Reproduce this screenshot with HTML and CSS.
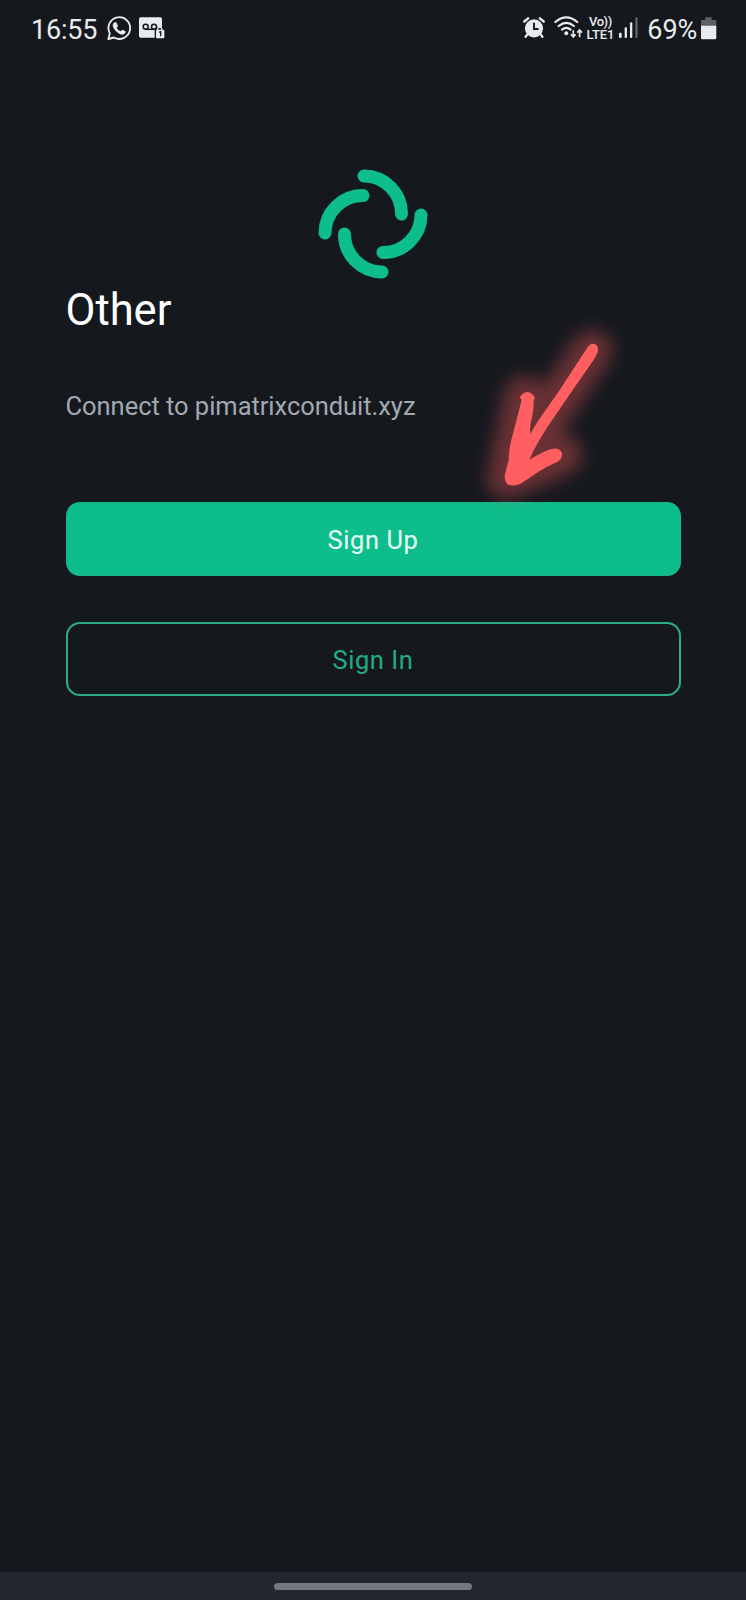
FILE: index.html
```html
<!DOCTYPE html>
<html lang="en">
<head>
<meta charset="utf-8">
<title>Other</title>
<link rel="stylesheet" href="styles.css">
</head>
<body>
<div class="screen">
  <header class="status">
    <div class="status-group">
      <span class="clock">16:55</span>
      <svg class="icon-chat" viewBox="0 0 72 72">
        <path d="M4 69 L8.500 52 A32.500 32.500 0 1 1 21 64.500 Z" fill="none" stroke="#e9ebed" stroke-width="5.500" stroke-linejoin="round"/>
        <path d="M23 19 L28 19 L33 30 L29 36 Q33 44 41 46 L46 41 L56 46 Q56 54 47 56 Q38 57 27 46 Q17 35 17 27 Q18 21 23 19 Z" fill="#e9ebed"/>
      </svg>
      <svg class="icon-voicemail" viewBox="0 0 78 66">
        <rect x="0" y="1" width="69" height="61" rx="5" fill="#e9ebed"/>
        <g fill="none" stroke="#16191e" stroke-width="4.500">
          <circle cx="20" cy="29" r="7.500"/>
          <circle cx="45" cy="29" r="7.500"/>
          <path d="M20 37 H45"/>
        </g>
        <path d="M47 66 V36 L54 30 H72 V36 H78 V66 Z" fill="#16191e"/>
        <rect x="51" y="38" width="25" height="26" rx="3" fill="#e9ebed"/>
        <path d="M56 39 V35 Q56 31 61 31 H63 Q68 31 68 35 V39" fill="none" stroke="#e9ebed" stroke-width="4"/>
        <path d="M60 46 L65 44 V58" fill="none" stroke="#16191e" stroke-width="4"/>
      </svg>
    </div>
    <div class="status-group status-right">
      <svg class="icon-alarm" viewBox="0 0 68 66">
        <circle cx="34" cy="35" r="28" fill="#e9ebed"/>
        <path d="M4 14 L16 4 M64 14 L52 4" fill="none" stroke="#e9ebed" stroke-width="7.500" stroke-linecap="round"/>
        <path d="M14 53 L8 61 M54 53 L60 61" stroke="#e9ebed" stroke-width="7" stroke-linecap="round"/>
        <path d="M34 18 V37 H48" fill="none" stroke="#16191e" stroke-width="6"/>
      </svg>
      <svg class="icon-wifi" viewBox="0 0 86 70">
        <g fill="none" stroke="#e9ebed" stroke-width="6.500" stroke-linecap="round">
          <path d="M4 18 Q37 -10 70 18"/>
          <path d="M14 30 Q37 11 60 30"/>
          <path d="M24 41 Q37 30 50 41"/>
        </g>
        <circle cx="37" cy="52" r="6" fill="#e9ebed"/>
        <g fill="none" stroke="#e9ebed" stroke-width="5">
          <path d="M58 43 V63 M51 55 L58 63 L65 55"/>
          <path d="M77 64 V42 M70 50 L77 42 L84 50"/>
        </g>
      </svg>
      <div class="volte"><span class="vo">Vo))</span><span class="lte">LTE1</span></div>
      <svg class="icon-signal" viewBox="0 0 58 64">
        <g fill="#e9ebed">
          <rect x="0" y="47" width="8" height="16" rx="3"/>
          <rect x="17" y="31" width="7" height="32" rx="3"/>
          <rect x="33" y="16" width="7" height="47" rx="3"/>
        </g>
        <rect x="49" y="1" width="7" height="62" rx="3" fill="#62656b"/>
      </svg>
      <span class="percent">69%</span>
      <svg class="icon-battery" viewBox="0 0 46 68">
        <path d="M13 1 H32 V9 H42 Q46 9 46 13 V27 H0 V13 Q0 9 4 9 H13 Z" fill="#5d6066"/>
        <path d="M0 26 H46 V63 Q46 67 42 67 H4 Q0 67 0 63 Z" fill="#e9ebed"/>
      </svg>
    </div>
  </header>
  <main class="content">
    <svg class="logo" viewBox="0 0 110 110">
      <g fill="none" stroke="#0dbd8b" stroke-width="13" stroke-linecap="round">
        <path d="M46 7 A37.700 37.700 0 0 1 83.500 45"/>
        <path d="M103 46 A37.700 37.700 0 0 1 65 83.500"/>
        <path d="M64 103 A37.700 37.700 0 0 1 26.500 65"/>
        <path d="M7 64 A37.700 37.700 0 0 1 45 26.500"/>
      </g>
    </svg>
    <h1 class="title">Other</h1>
    <p class="subtitle">Connect to pimatrixconduit.xyz</p>
    <div class="actions">
      <button class="btn btn-primary">Sign Up</button>
      <button class="btn btn-outline">Sign In</button>
    </div>
  </main>
  <footer class="navbar"><span class="handle"></span></footer>
  <svg class="arrow" viewBox="0 0 540 660">
    <defs>
      <filter id="glow" filterUnits="userSpaceOnUse" x="-140" y="-120" width="820" height="900"><feGaussianBlur stdDeviation="25"/></filter>
    </defs>
    <g filter="url(#glow)" opacity=".36" fill="none" stroke="#ff5c5e" stroke-width="122" stroke-linecap="round" stroke-linejoin="round">
      <path d="M396 122 L275 300 Q205 390 180 460 L142 504 L194 260 M142 504 L304 434"/>
    </g>
    <path fill="#ff5f60" d="M384 110 Q392 98 404 102 Q418 109 412 128 Q405 146 376 185 Q325 258 274 334 Q234 392 208 449 Q246 426 274 417 Q296 411 305 427 Q310 444 293 455 Q266 466 239 483 Q212 501 184 520 Q164 532 142 523 Q132 513 135 493 L146 450 Q147 410 158 374 Q173 318 185 269 Q176 262 184 256 Q202 236 220 256 Q228 264 221 270 Q222 295 216 322 Q208 353 211 371 Q230 337 255 303 Q301 240 342 174 Z"/>
  </svg>
</div>
</body>
</html>
```
FILE: styles.css
```css
* { box-sizing: border-box; }
body {
  margin: 0;
  background: #15191e;
  font-family: Roboto, "Liberation Sans", sans-serif;
}
.screen {
  position: relative;
  width: 746px;
  height: 1600px;
  display: flex;
  flex-direction: column;
  overflow: hidden;
}
.status {
  height: 60px;
  padding: 0 30px 4px 31px;
  display: flex;
  justify-content: space-between;
  align-items: center;
  color: #e9ebed;
  flex: none;
}
.status-group { display: flex; align-items: center; }
.status svg { flex: none; display: block; overflow: visible; }
.clock { font-size: 27px; letter-spacing: -.2px; line-height: 32px; width: 76px; padding-top: 3px; white-space: nowrap; }
.icon-chat { width: 24px; height: 24px; }
.icon-voicemail { width: 26px; height: 22px; margin-left: 8px; }
.icon-alarm { width: 22px; height: 21.400px; }
.icon-wifi { width: 28.600px; height: 23.300px; margin-left: 9px; }
.volte {
  width: 29px;
  margin-left: 3.800px;
  display: flex;
  flex-direction: column;
  align-items: center;
  font-weight: 500;
}
.vo { font-size: 13px; line-height: 12px; letter-spacing: -.5px; }
.lte { font-size: 13px; line-height: 13px; letter-spacing: -.1px; }
.icon-signal { width: 19.300px; height: 21.300px; margin-left: 4px; }
.percent { font-size: 27px; line-height: 32px; margin-left: 9px; width: 53.500px; padding-top: 3px; white-space: nowrap; }
.icon-battery { width: 15.300px; height: 22.600px; }
.content {
  flex: 1;
  padding: 109px 65.500px 0;
  display: flex;
  flex-direction: column;
}
.logo { width: 110px; height: 110px; align-self: center; }
.title {
  margin: 6px 0 0;
  font-size: 43.500px;
  line-height: 52px;
  font-weight: 400;
  color: #fff;
}
.subtitle {
  margin: 53px 0 0;
  font-size: 25.500px;
  letter-spacing: -.04px;
  line-height: 32px;
  color: #a2a8b2;
}
.actions { margin-top: 80px; display: flex; flex-direction: column; gap: 46px; }
.btn {
  height: 74px;
  border: 2px solid #2bae88;
  border-radius: 14px;
  padding: 2px 0 0;
  font: 400 25.500px/30px Roboto, "Liberation Sans", sans-serif;
  letter-spacing: .55px;
}
.btn-primary { background: #0dbd8b; border-color: #14b98b; color: #e8fff8; }
.btn-outline { background: transparent; color: #22ab84; }
.navbar {
  height: 28px;
  background: #22262e;
  display: flex;
  justify-content: center;
  align-items: center;
  flex: none;
}
.handle { width: 198px; height: 7px; border-radius: 4px; background: #747780; }
.arrow {
  position: absolute;
  left: 460px;
  top: 310px;
  width: 180px;
  height: 220px;
  overflow: visible;
  pointer-events: none;
}
```
